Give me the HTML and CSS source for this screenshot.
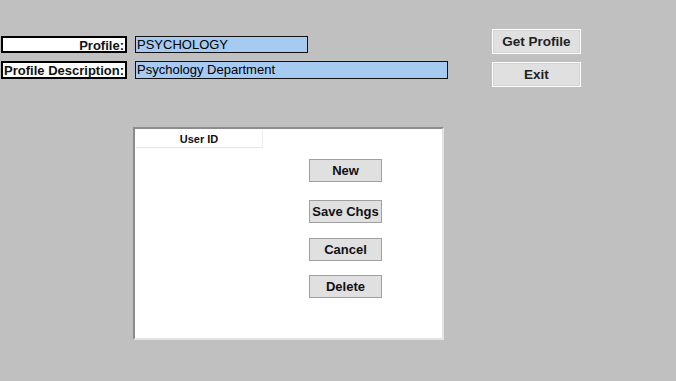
FILE: index.html
```html
<!DOCTYPE html>
<html lang="en">
<head>
    <meta charset="UTF-8">
    <meta name="viewport" content="width=device-width, initial-scale=1.0">
    <title>Profile Maintenance</title>
    <link rel="stylesheet" href="styles.css">
</head>
<body>

<div class="top">
    <div class="fields">
        <div class="row row-short">
            <div class="label">Profile:</div>
            <div class="field field-short">PSYCHOLOGY</div>
        </div>
        <div class="row">
            <div class="label">Profile Description:</div>
            <div class="field field-long">Psychology Department</div>
        </div>
    </div>
    <div class="actions">
        <button class="btn-top">Get Profile</button>
        <button class="btn-top">Exit</button>
    </div>
</div>

<div class="panel">
    <div class="grid-head">User ID</div>
    <div class="panel-buttons">
        <button class="btn">New</button>
        <button class="btn btn-save">Save Chgs</button>
        <button class="btn">Cancel</button>
        <button class="btn btn-delete">Delete</button>
    </div>
</div>

</body>
</html>
```

FILE: styles.css
```css
body {
    font-family: "Liberation Sans", Arial, sans-serif;
    background-color: #c0c0c0;
    margin: 0;
    padding: 0;
}
.top {
    display: flex;
    padding-top: 29px;
    padding-left: 1px;
}
.fields {
    display: flex;
    flex-direction: column;
    gap: 8px;
    margin-top: 7px;
}
.row {
    display: flex;
    gap: 8px;
    height: 18px;
}
.row-short {
    height: 17px;
}
.label {
    width: 126px;
    box-sizing: border-box;
    background: #fff;
    border: 2px solid #000;
    text-align: right;
    font-weight: bold;
    font-size: 13px;
    line-height: 15px;
    padding-right: 1px;
    color: #111;
    white-space: nowrap;
}
.field {
    box-sizing: border-box;
    background: #a6caf0;
    border: 1px solid #111;
    font-size: 13px;
    line-height: 16px;
    padding-left: 1px;
    color: #000;
    white-space: nowrap;
}
.field-short {
    width: 173px;
}
.field-long {
    width: 313px;
}
.actions {
    display: flex;
    flex-direction: column;
    gap: 8px;
    margin-left: 44px;
}
.btn-top {
    width: 89px;
    height: 25px;
    background: #e0e0e0;
    border: 1px solid #fff;
    box-shadow: inset 0 0 0 1px #d4d4d4;
    font-family: inherit;
    font-weight: bold;
    font-size: 13.5px;
    color: #222;
    padding: 0;
    white-space: nowrap;
}
.panel {
    display: flex;
    align-items: flex-start;
    margin-left: 133px;
    margin-top: 40px;
    width: 311px;
    height: 213px;
    box-sizing: border-box;
    background: #fff;
    border-style: solid;
    border-width: 2px;
    border-color: #8c8c8c #e4e4e4 #e4e4e4 #8c8c8c;
    padding: 1px;
}
.grid-head {
    width: 127px;
    height: 18px;
    box-sizing: border-box;
    border-bottom: 1px solid #e6e6e6;
    border-right: 1px solid #eeeeee;
    text-align: center;
    font-weight: bold;
    font-size: 11px;
    line-height: 19px;
    color: #111;
}
.panel-buttons {
    display: flex;
    flex-direction: column;
    gap: 15px;
    margin-left: 46px;
    margin-top: 29px;
}
.btn {
    width: 73px;
    height: 23px;
    background: #e0e0e0;
    border: 1px solid #a0a0a0;
    font-family: inherit;
    font-weight: bold;
    font-size: 13px;
    color: #111;
    padding: 0;
    white-space: nowrap;
}
.btn-save {
    margin-top: 3px;
}
.btn-delete {
    margin-top: -1px;
}
```
